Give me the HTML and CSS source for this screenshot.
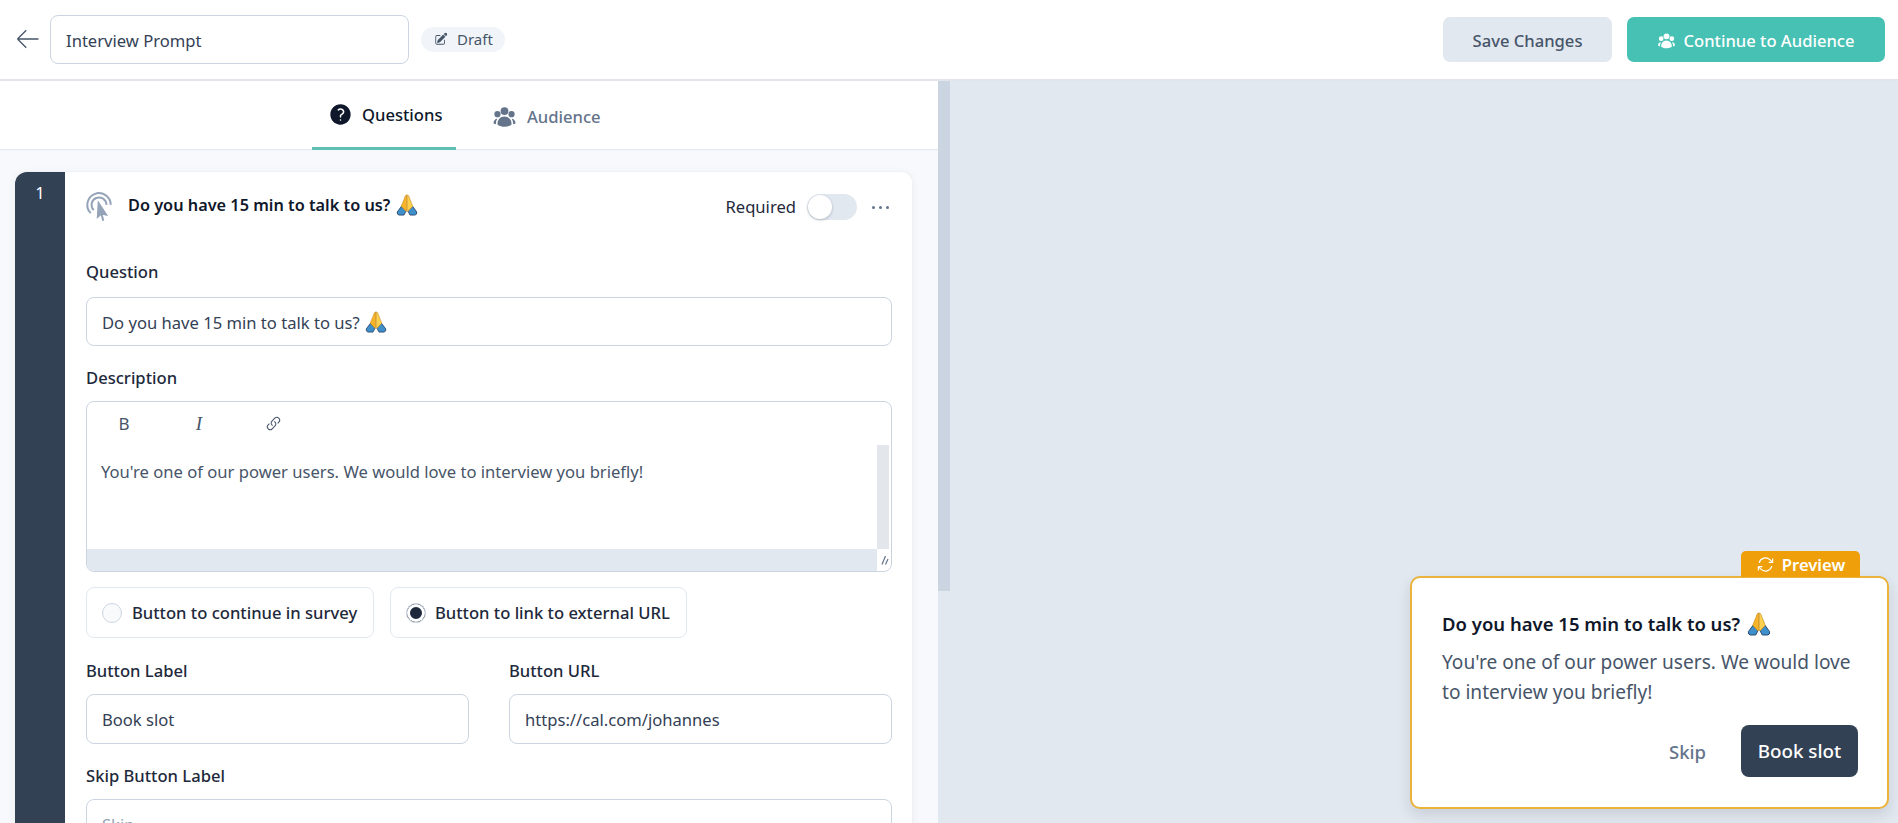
FILE: index.html
```html
<!DOCTYPE html>
<html lang="en">
<head>
<meta charset="utf-8">
<title>Interview Prompt</title>
<link rel="stylesheet" href="styles.css">
</head>
<body>
<svg class="defs" width="0" height="0" aria-hidden="true">
  <symbol id="i-group" viewBox="0 0 24 24">
    <path d="M8.25 6.75a3.75 3.75 0 117.5 0 3.75 3.75 0 01-7.5 0zM15.75 9.75a3 3 0 116 0 3 3 0 01-6 0zM2.25 9.75a3 3 0 116 0 3 3 0 01-6 0zM6.31 15.117A6.745 6.745 0 0112 12a6.745 6.745 0 016.709 7.498.75.75 0 01-.372.568A12.696 12.696 0 0112 21.75c-2.305 0-4.47-.612-6.337-1.684a.75.75 0 01-.372-.568 6.787 6.787 0 011.019-4.38z"/>
    <path d="M5.082 14.254a8.287 8.287 0 00-1.308 5.135 9.687 9.687 0 01-1.764-.44l-.115-.04a.563.563 0 01-.373-.487l-.01-.121a3.75 3.75 0 013.57-4.047zM20.226 19.389a8.287 8.287 0 00-1.308-5.135 3.75 3.75 0 013.57 4.047l-.01.121a.563.563 0 01-.373.486l-.115.04c-.567.2-1.156.349-1.764.441z"/>
  </symbol>
  <symbol id="i-pray" viewBox="0 0 36 36">
    <path fill="#3f8fcb" stroke="#1d3a5f" stroke-width="1.3" d="M2 29.500L9 20l7.500 8-3.500 6.500H5Q1.500 34 2 29.500z"/>
    <path fill="#3f8fcb" stroke="#1d3a5f" stroke-width="1.3" d="M34 29.500L27 20l-7.500 8 3.500 6.500H31Q34.500 34 34 29.500z"/>
    <path fill="#f9b52a" stroke="#b97c10" stroke-width=".8" d="M17.700 1.500c-2 0-3 2-3.700 5L8.500 20l8 8.500 1.200-2z"/>
    <path fill="#fdd04f" stroke="#b97c10" stroke-width=".8" d="M18.300 1.500c2 0 3 2 3.700 5L27.500 20l-8 8.500-1.200-2z"/>
  </symbol>
</svg>

<header class="topbar">
  <div class="topbar-left">
    <svg class="back-icon" viewBox="0 0 24 24"><path d="M10.500 19.500L3 12m0 0l7.500-7.500M3 12h18"/></svg>
    <div class="name-input">Interview Prompt</div>
    <span class="badge">
      <svg class="badge-icon" viewBox="0 0 24 24"><path d="M21.731 2.269a2.625 2.625 0 00-3.712 0l-1.157 1.157 3.712 3.712 1.157-1.157a2.625 2.625 0 000-3.712zM19.513 8.199l-3.712-3.712-8.400 8.400a5.250 5.250 0 00-1.320 2.214l-.8 2.685a.75.75 0 00.933.933l2.685-.8a5.250 5.250 0 002.214-1.320l8.400-8.400z"/><path d="M5.250 5.250a3 3 0 00-3 3v10.500a3 3 0 003 3h10.500a3 3 0 003-3V13.500a.75.75 0 00-1.500 0v5.250a1.500 1.500 0 01-1.500 1.500H5.250a1.500 1.500 0 01-1.500-1.500V8.250a1.500 1.500 0 011.500-1.500h5.250a.75.75 0 000-1.500H5.250z"/></svg>
      Draft
    </span>
  </div>
  <div class="topbar-actions">
    <button class="btn btn-secondary">Save Changes</button>
    <button class="btn btn-primary"><svg class="btn-icon"><use href="#i-group"/></svg>Continue to Audience</button>
  </div>
</header>

<main class="main">
  <section class="editor-pane">
    <nav class="tabs">
      <div class="tab tab-active">
        <svg class="tab-icon" viewBox="0 0 24 24"><path fill-rule="evenodd" d="M2.250 12c0-5.385 4.365-9.750 9.750-9.750s9.750 4.365 9.750 9.750-4.365 9.750-9.750 9.750S2.250 17.385 2.250 12zm11.378-3.917c-.89-.777-2.366-.777-3.255 0a.75.75 0 01-.988-1.129c1.454-1.272 3.776-1.272 5.230 0 1.513 1.324 1.513 3.518 0 4.842a3.750 3.750 0 01-.837.552c-.676.328-1.028.774-1.028 1.152v.75a.75.75 0 01-1.500 0v-.75c0-1.279 1.060-2.107 1.875-2.502.182-.088.351-.199.503-.331.83-.727.83-1.857 0-2.584zM12 18a.75.75 0 100-1.500.75.75 0 000 1.500z"/></svg>
        Questions
      </div>
      <div class="tab tab-muted"><svg class="tab-icon tab-icon-group"><use href="#i-group"/></svg>Audience</div>
    </nav>

    <div class="pane-body">
      <article class="card">
        <div class="card-num">1</div>
        <div class="card-body">
          <div class="card-head">
            <svg class="cta-icon" viewBox="0 0 24 24"><path d="M15.042 21.672L13.684 16.600m0 0l-2.510 2.225.569-9.470 5.227 7.917-3.286-.672z" class="cta-cursor"/><path d="M6.166 16.333A8.250 8.250 0 1120.250 10.500M8.288 14.212A5.250 5.250 0 1117.250 10.500"/></svg>
            <h2 class="card-title">Do you have 15 min to talk to us? <svg class="emoji"><use href="#i-pray"/></svg></h2>
            <span class="required">Required</span>
            <span class="toggle"><span class="knob"></span></span>
            <span class="dots"><i></i><i></i><i></i></span>
          </div>

          <div class="field field-first">
            <div class="label label-first">Question</div>
            <div class="input input-short">Do you have 15 min to talk to us? <svg class="emoji"><use href="#i-pray"/></svg></div>
          </div>

          <div class="field">
            <div class="label">Description</div>
            <div class="rte">
              <div class="rte-tools">
                <span class="tool tool-b">B</span>
                <span class="tool tool-i">I</span>
                <svg class="tool-link" viewBox="0 0 24 24"><path d="M13.190 8.688a4.500 4.500 0 011.242 7.244l-4.500 4.500a4.500 4.500 0 01-6.364-6.364l1.757-1.757m13.350-.622l1.757-1.757a4.500 4.500 0 00-6.364-6.364l-4.500 4.500a4.500 4.500 0 001.242 7.244"/></svg>
              </div>
              <div class="rte-text">You're one of our power users. We would love to interview you briefly!</div>
              <div class="rte-vbar"></div>
              <div class="rte-hbar"></div>
              <div class="rte-corner"><svg viewBox="0 0 10 10"><path d="M3 9.500L6.500 1M6.500 9.500L9 4"/></svg></div>
            </div>
          </div>

          <div class="radios">
            <div class="radio-card radio-first"><span class="radio"></span>Button to continue in survey</div>
            <div class="radio-card radio-second"><span class="radio radio-on"></span>Button to link to external URL</div>
          </div>

          <div class="two-col">
            <div>
              <div class="label">Button Label</div>
              <div class="input">Book slot</div>
            </div>
            <div>
              <div class="label">Button URL</div>
              <div class="input">https://cal.com/johannes</div>
            </div>
          </div>

          <div class="field">
            <div class="label">Skip Button Label</div>
            <div class="input input-placeholder">Skip</div>
          </div>
        </div>
      </article>
    </div>
  </section>

  <div class="pane-scroll"><div class="pane-thumb"></div></div>

  <section class="preview-pane">
    <div class="widget">
      <div class="preview-tag">
        <svg class="preview-icon" viewBox="0 0 24 24"><path d="M16.023 9.348h4.992v-.001M2.985 19.644v-4.992m0 0h4.992m-4.993 0l3.181 3.183a8.250 8.250 0 0013.803-3.700M4.031 9.865a8.250 8.250 0 0113.803-3.700l3.181 3.182m0-4.991v4.990"/></svg>
        Preview
      </div>
      <h3 class="widget-title">Do you have 15 min to talk to us? <svg class="emoji emoji-lg"><use href="#i-pray"/></svg></h3>
      <p class="widget-text">You're one of our power users. We would love to interview you briefly!</p>
      <div class="widget-actions">
        <span class="widget-skip">Skip</span>
        <button class="widget-book">Book slot</button>
      </div>
    </div>
  </section>
</main>
</body>
</html>
```
FILE: styles.css
```css
* { box-sizing: border-box; }
html, body { margin: 0; height: 100%; }
body {
  width: 1898px;
  height: 823px;
  overflow: hidden;
  font-family: "Noto Sans", "Open Sans", sans-serif;
  font-size: 16.6px;
  color: #334155;
  background: #fff;
}
.defs { position: absolute; }

.topbar {
  height: 81px;
  border-bottom: 2px solid #e2e5ea;
  display: flex;
  align-items: center;
  justify-content: space-between;
  padding: 0 13px 1px 14px;
  background: #fff;
}
.topbar-left { display: flex; align-items: center; }
.back-icon {
  width: 28px; height: 28px;
  fill: none; stroke: #475569; stroke-width: 1.1;
  margin-right: 8px;
  flex: none;
}
.name-input {
  width: 359px; height: 49px;
  border: 1px solid #cbd5e1;
  border-radius: 8px;
  padding: 2px 15px 0;
  display: flex; align-items: center;
  color: #334155;
}
.badge {
  margin-left: 12px;
  height: 25px;
  width: 84px;
  border-radius: 13px;
  background: #f1f5f9;
  display: flex; align-items: center;
  padding-left: 13px;
  gap: 9px;
  font-size: 15px;
  color: #475569;
}
.badge-icon { width: 14px; height: 14px; fill: #475569; }
.topbar-actions { display: flex; gap: 15px; }
.btn {
  height: 45px;
  border: 0;
  border-radius: 7px;
  padding: 2px 0 0;
  font: inherit;
  font-weight: 500;
  display: flex; align-items: center; justify-content: center;
}
.btn-secondary { width: 169px; background: #e2e8f0; color: #475569; }
.btn-primary { width: 258px; background: #47c1b3; color: #fff; gap: 7px; }
.btn-icon { width: 19px; height: 19px; fill: #fff; }

.main { display: flex; height: 742px; }
.editor-pane {
  width: 938px;
  flex: none;
  background: #f7f9fc;
  display: flex; flex-direction: column;
  overflow: hidden;
}
.tabs {
  height: 69px;
  flex: none;
  background: #fff;
  border-bottom: 1px solid #e2e8f0;
  display: flex;
  justify-content: center;
}
.tab { display: flex; align-items: center; font-weight: 500; height: 69px; }
.tab-active {
  width: 144px;
  padding-left: 16px;
  gap: 9px;
  color: #0f172a;
  border-bottom: 3px solid #5fbfb4;
}
.tab-muted { width: 170px; padding-left: 36px; gap: 10px; color: #64748b; padding-top: 1px; }
.tab-icon { width: 25px; height: 25px; fill: #0f172a; flex: none; }
.tab-icon-group { fill: #64748b; }

.pane-body { padding: 21px 25px 0 15px; flex: 1; }
.card {
  display: flex;
  min-height: 700px;
  background: #fff;
  border: 1px solid #eef1f5;
  border-left: 0;
  border-radius: 12px 12px 0 0;
  box-shadow: 0 2px 10px rgba(15, 23, 42, .05);
}
.card-num {
  width: 50px;
  flex: none;
  background: #334155;
  color: #fff;
  text-align: center;
  padding-top: 9px;
  line-height: 24px;
  border-radius: 12px 0 0 0;
}
.card-body { flex: 1; padding: 0 20px 0 21px; min-width: 0; }
.card-head { height: 70px; display: flex; align-items: center; }
.cta-icon {
  width: 34px; height: 34px;
  margin-left: -4px;
  fill: none; stroke: #94a3b8; stroke-width: 1.4;
  flex: none;
}
.cta-cursor { fill: #94a3b8; }
.card-title {
  margin: 0 0 5px 12px;
  flex: 1;
  font-size: 16.3px;
  font-weight: 600;
  color: #0f172a;
  display: flex; align-items: center; gap: 6px;
}
.emoji { width: 22px; height: 22px; flex: none; }
.emoji-lg { width: 24px; height: 24px; }
.required { color: #1e293b; font-weight: 400; margin: 0 11px 2px 0; }
.toggle {
  width: 50px; height: 26px;
  border-radius: 13px;
  background: #e2e8f0;
  display: flex; align-items: center;
  padding-left: 1px;
  flex: none;
}
.knob {
  width: 24px; height: 24px;
  border-radius: 50%;
  background: #fff;
  box-shadow: 0 1px 3px rgba(15, 23, 42, .25);
}
.dots { display: flex; gap: 4px; margin-left: 15px; margin-right: 3px; }
.dots i { width: 3px; height: 3px; border-radius: 50%; background: #64748b; }

.field { margin-top: 20px; }
.field-first { margin-top: 18px; }
.label { line-height: 24px; font-weight: 500; color: #1e293b; margin-bottom: 11px; }
.label-first { margin-bottom: 13px; }
.input {
  height: 50px;
  border: 1px solid #cbd5e1;
  border-radius: 8px;
  padding: 0 15px;
  display: flex; align-items: center; gap: 5px;
  color: #334155;
  background: #fff;
}
.input-short { height: 49px; padding-top: 1px; }
.input-placeholder { color: #94a3b8; }

.rte {
  height: 171px;
  border: 1px solid #cbd5e1;
  border-radius: 8px;
  display: grid;
  grid-template-columns: 1fr 14px;
  grid-template-rows: 43px 104px 22px;
  overflow: hidden;
}
.rte-tools {
  grid-column: 1 / 3;
  display: flex; align-items: center;
  color: #475569;
}
.tool { width: 14px; text-align: center; line-height: 1; }
.tool-b { margin-left: 30px; font-size: 17px; }
.tool-i { margin-left: 61px; font-family: "Liberation Serif", serif; font-style: italic; font-size: 19px; }
.tool-link {
  width: 15px; height: 15px;
  margin-left: 60px;
  fill: none; stroke: #475569; stroke-width: 1.700;
}
.rte-text { padding: 15px 14px; color: #475569; line-height: 24px; white-space: nowrap; }
.rte-vbar { background: #e3e7ec; margin-right: 2px; }
.rte-hbar { background: #e2e8f0; }
.rte-corner { display: flex; align-items: center; justify-content: center; }
.rte-corner svg { width: 10px; height: 10px; fill: none; stroke: #64748b; stroke-width: 1.2; }

.radios { display: flex; margin-top: 15px; }
.radio-card {
  height: 51px;
  border: 1px solid #e2e8f0;
  border-radius: 8px;
  display: flex; align-items: center;
  font-weight: 500;
  color: #1e293b;
  background: #fff;
}
.radio-first { width: 288px; padding-left: 15px; gap: 10px; }
.radio-second { width: 297px; margin-left: 16px; padding-left: 15px; gap: 9px; }
.radio {
  width: 20px; height: 20px;
  border-radius: 50%;
  border: 1px solid #cbd5e1;
  background: #f8fafc;
  flex: none;
}
.radio-on { background: #1e293b; box-shadow: inset 0 0 0 3px #fff; }

.two-col { display: grid; grid-template-columns: 383px 383px; column-gap: 40px; margin-top: 21px; }

.pane-scroll { width: 12px; flex: none; background: #e2e8f0; }
.pane-thumb { height: 510px; background: #cbd5e1; }

.preview-pane {
  flex: 1;
  background: #e2e8f0;
  display: flex;
  flex-direction: column;
  justify-content: flex-end;
  align-items: flex-end;
  padding: 0 9px 14px 0;
}
.widget {
  position: relative;
  width: 479px; height: 233px;
  background: #fff;
  border: 2px solid #e9b33c;
  border-radius: 10px;
  padding: 32px 29px 0 30px;
  box-shadow: 0 6px 14px rgba(15, 23, 42, .12);
}
.preview-tag {
  position: absolute;
  right: 27px; top: -27px;
  width: 119px; height: 26px;
  background: #ee9f0a;
  color: #fff;
  font-weight: 600;
  border-radius: 5px 5px 0 0;
  display: flex; align-items: center; justify-content: center;
  gap: 7px;
}
.preview-icon { width: 19px; height: 19px; fill: none; stroke: #fff; stroke-width: 1.500; }
.widget-title {
  margin: 0;
  font-size: 18.5px;
  line-height: 28px;
  font-weight: 600;
  color: #0f172a;
  display: flex; align-items: center; gap: 7px;
}
.widget-text { margin: 9px 0 0; font-size: 19.1px; line-height: 30px; color: #475569; }
.widget-actions { display: flex; justify-content: flex-end; align-items: center; margin-top: 18px; }
.widget-skip { font-size: 18.5px; font-weight: 500; color: #64748b; margin-right: 35px; }
.widget-book {
  width: 117px; height: 52px;
  border: 0;
  border-radius: 8px;
  background: #334155;
  color: #fff;
  font: inherit;
  font-size: 18.8px;
  font-weight: 500;
}
```
